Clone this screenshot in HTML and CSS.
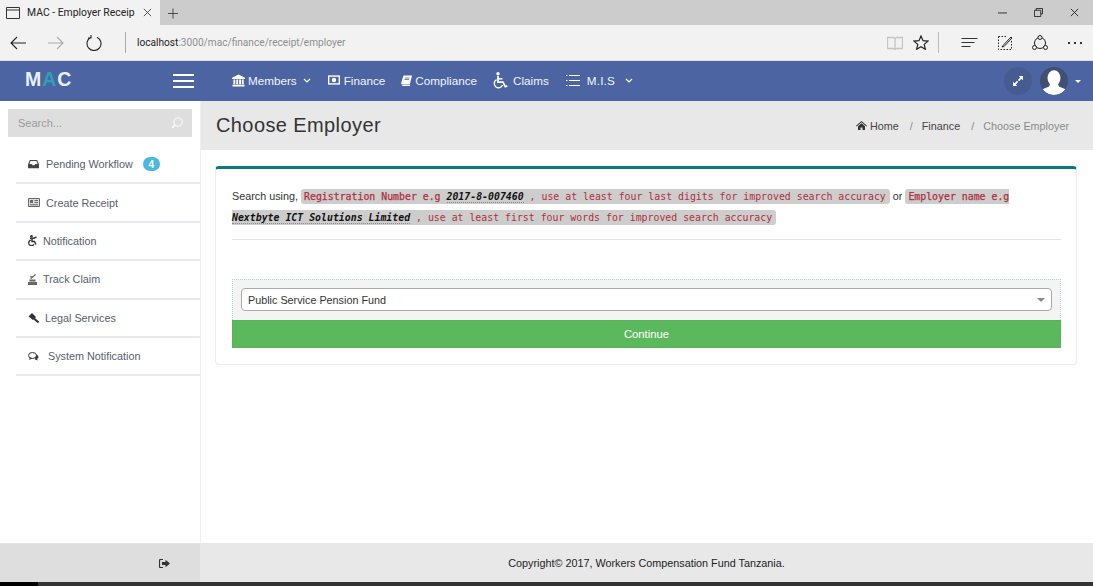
FILE: index.html
```html
<!DOCTYPE html>
<html lang="en">
<head>
<meta charset="utf-8">
<title>MAC - Employer Receipt</title>
<link rel="stylesheet" href="styles.css">
</head>
<body>
<div class="chrome-tabs">
  <div class="tab">
    <svg class="tab-page" viewBox="0 0 14 12"><path d="M.5.5h13v11H.5zM.5 3h13" fill="none" stroke="#333"/></svg>
    <span class="tab-title">MAC - Employer Receip</span>
    <svg class="tab-x" viewBox="0 0 10 10"><path d="M1 1l8 8M9 1l-8 8" stroke="#444" fill="none"/></svg>
  </div>
  <svg class="new-tab" viewBox="0 0 12 12"><path d="M6 0v12M0 6h12" stroke="#333" fill="none"/></svg>
  <div class="win-btns">
    <svg viewBox="0 0 10 10"><path d="M0 5.500h10" stroke="#222" fill="none"/></svg>
    <svg viewBox="0 0 10 10"><path d="M2.500 2.500V.5h7v6h-2M.5 2.500h7v7h-7z" stroke="#222" fill="none"/></svg>
    <svg viewBox="0 0 10 10"><path d="M1 1l8 8M9 1l-8 8" stroke="#222" fill="none"/></svg>
  </div>
</div>
<div class="chrome-bar">
  <svg class="ctl" viewBox="0 0 16 14"><path d="M16 7H1M7 1L1 7l6 6" fill="none" stroke="#222" stroke-width="1.100"/></svg>
  <svg class="ctl ctl-fwd" viewBox="0 0 16 14"><path d="M0 7h15M9 1l6 6-6 6" fill="none" stroke="#aaa" stroke-width="1.100"/></svg>
  <svg class="ctl ctl-reload" viewBox="0 0 16 16"><path d="M5 2.200A7 7 0 1 0 11 2.200M5 0v3H2" fill="none" stroke="#222" stroke-width="1.100"/></svg>
  <div class="addr-sep"></div>
  <div class="addr"><span class="host">localhost</span>:3000/mac/finance/receipt/employer</div>
  <div class="bar-right">
    <svg class="r-book" viewBox="0 0 16 14"><path d="M.5 1.500h6l1.500 1 1.500-1h6v11h-6l-1.500 1-1.500-1h-6zM8 2.500v10" fill="none" stroke="#c4c4c4" stroke-width="1.300"/></svg>
    <svg class="r-star" viewBox="0 0 16 15"><path d="M8 1l2 4.700 5 .4-3.800 3.300 1.200 4.900L8 11.700l-4.400 2.600 1.200-4.900L1 6.100l5-.4z" fill="none" stroke="#222" stroke-width="1.200"/></svg>
    <div class="bar-sep"></div>
    <svg class="r-hub" viewBox="0 0 16 10"><path d="M0 .5h16M0 4.500h13M0 8.500h9" stroke="#333" fill="none"/></svg>
    <svg class="r-note" viewBox="0 0 16 16"><path d="M1.500 1.500h8M1.500 1.500v13h13V6" fill="none" stroke="#222" stroke-dasharray="1.500 1.500"/><path d="M6 10.500L14 2l1 1-8 8.500-2 .5z" fill="none" stroke="#222"/></svg>
    <svg class="r-share" viewBox="0 0 16 16"><circle cx="8" cy="8" r="5.500" fill="none" stroke="#222"/><circle cx="8" cy="2.500" r="2" fill="#f2f2f2" stroke="#222"/><circle cx="2.500" cy="12.500" r="2" fill="#f2f2f2" stroke="#222"/><circle cx="13.500" cy="12.500" r="2" fill="#f2f2f2" stroke="#222"/></svg>
    <svg class="r-more" viewBox="0 0 14 2"><path d="M0 0h2v2H0zM6 0h2v2H6zM12 0h2v2h-2z" fill="#333"/></svg>
  </div>
</div>
<header class="nav">
  <div class="brand">M<span class="brand-a">A</span>C</div>
  <div class="burger"><i></i><i></i><i></i></div>
  <nav class="menu">
    <a class="m-item m-members">
      <svg class="ico13" viewBox="0 0 14 13"><path d="M7 0l7 3.500V5H0V3.500zM1.500 5.500h2v5h-2zM4.600 5.500h2v5h-2zM7.700 5.500h2v5h-2zM10.600 5.500h2v5h-2zM.5 11h13v2H.5z" fill="#fff"/></svg>
      <span>Members</span>
      <svg class="chev" viewBox="0 0 8 5"><path d="M1 1l3 3 3-3" fill="none" stroke="#fff" stroke-width="1.200"/></svg>
    </a>
    <a class="m-item m-finance">
      <svg class="ico-money" viewBox="0 0 13 10"><path d="M0 0h13v10H0z" fill="#fff"/><path d="M1.500 1.500h10v7h-10z" fill="#4c64a2"/><circle cx="6.500" cy="5" r="2.400" fill="#fff"/></svg>
      <span>Finance</span>
    </a>
    <a class="m-item m-compliance">
      <svg class="ico11" viewBox="0 0 11 11"><path d="M2.500.5h8.500L8.800 9.500H1.200C.2 9.500 0 8.500.3 7.500z" fill="#fff"/><path d="M1.200 10.500h7.800" stroke="#fff"/><path d="M4 3h4.500M3.600 4.500h4.500" stroke="#4c64a2" stroke-width=".8"/></svg>
      <span>Compliance</span>
    </a>
    <a class="m-item m-claims">
      <svg class="ico-wheel" viewBox="0 0 16 17"><circle cx="6" cy="1.800" r="1.700" fill="#fff"/><path d="M6 4v6.200h5l2.300 4.500 2-.8" fill="none" stroke="#fff" stroke-width="1.700"/><path d="M6 6.800h4.500" stroke="#fff" stroke-width="1.500"/><path d="M4.600 7.600a4.300 4.300 0 1 0 6 5.300" fill="none" stroke="#fff" stroke-width="1.400"/></svg>
      <span>Claims</span>
    </a>
    <a class="m-item m-mis">
      <svg class="ico-list" viewBox="0 0 14 11"><path d="M3 .5h11M3 5.500h11M3 10.500h11M0 .5h1.500M0 5.500h1.500M0 10.500h1.500" stroke="#fff" fill="none"/></svg>
      <span>M.I.S</span>
      <svg class="chev" viewBox="0 0 8 5"><path d="M1 1l3 3 3-3" fill="none" stroke="#fff" stroke-width="1.200"/></svg>
    </a>
  </nav>
  <div class="nav-right">
    <div class="circle">
      <svg class="expand" viewBox="0 0 10 10"><path d="M5.800 0H10v4.200L8.500 2.800 6 5.200 4.800 4 7.200 1.500zM4.200 10H0V5.800l1.500 1.400L4 4.800 5.200 6 2.800 8.500z" fill="#fff"/></svg>
    </div>
    <div class="circle avatar">
      <svg viewBox="0 0 28 28"><defs><clipPath id="ac"><circle cx="14" cy="14" r="14"/></clipPath></defs><g clip-path="url(#ac)"><ellipse cx="14" cy="11" rx="6.500" ry="7.800" fill="#fff"/><path d="M10 17h8l1 2.500 7 3V28H2v-5.500l7-3z" fill="#fff"/></g></svg>
    </div>
    <span class="caret"></span>
  </div>
</header>
<div class="main">
  <aside class="side">
    <div class="search">
      <span>Search...</span>
      <svg viewBox="0 0 12 12"><circle cx="7" cy="5" r="4.200" fill="none" stroke="#fff"/><path d="M4 8l-3 3" stroke="#fff" stroke-width="1.200"/></svg>
    </div>
    <ul class="side-list">
      <li><svg class="s-ico s-inbox" viewBox="0 0 12 10"><path d="M2 .5h8l2 5V9.500H0V5.500z" fill="#444"/><path d="M2.800 1.700h6.400l1.200 3.300H8L7 6.300H5L4 5H1.600z" fill="#fff"/></svg><span class="lab l-pending">Pending Workflow</span><span class="badge">4</span></li>
      <li><svg class="s-ico s-wide" viewBox="0 0 12 9"><path d="M.5.500h11v8H.5z" fill="#ddd" stroke="#666"/><path d="M2 2h3v3H2zM6.500 2h3.500v1H6.500zM6.500 4h3.500v1H6.500zM2 6.200h8v1H2z" fill="#666"/></svg><span class="lab l-create">Create Receipt</span></li>
      <li><svg class="s-ico s-small" viewBox="0 0 9 11"><circle cx="3.500" cy="1.300" r="1.300" fill="#333"/><path d="M2 3.200h4l2.500-1.400M4 3v3.500h2.500l1.500 3" fill="none" stroke="#333" stroke-width="1.500"/><path d="M2.800 5.200a2.800 2.800 0 1 0 3.200 4" fill="none" stroke="#333" stroke-width="1.300"/></svg><span class="lab l-notif">Notification</span></li>
      <li><svg class="s-ico s-small" viewBox="0 0 9 11"><path d="M0 8h9v3H0zM1.500 5.500h6v2h-6z" fill="#666"/><path d="M3 4.500L7.500.5" stroke="#666" stroke-width="1.200"/><path d="M2 2.500h3M2 4h2" stroke="#666" stroke-width=".7"/></svg><span class="lab l-track">Track Claim</span></li>
      <li><svg class="s-ico s-gavel" viewBox="0 0 11 10"><path d="M4 0l4 4-3 3-4.500-3.500z" fill="#333"/><path d="M6 5.500l4.500 4" stroke="#333" stroke-width="2"/></svg><span class="lab l-legal">Legal Services</span></li>
      <li><svg class="s-ico s-chat" viewBox="0 0 11 9"><ellipse cx="4.500" cy="3.500" rx="4" ry="3" fill="none" stroke="#333"/><path d="M2 5.500L1 8l3-1.500" fill="#333"/><path d="M8.500 2.500c2.500 1.500 2.500 3.500.5 4.500l1 1.500-3-1" fill="#333"/></svg><span class="lab l-system">System Notification</span></li>
    </ul>
  </aside>
  <main class="content">
    <div class="page-head">
      <h1>Choose Employer</h1>
      <ol class="crumbs">
        <li class="c-home"><svg viewBox="0 0 11 9"><path d="M5.500 0L11 4.700l-.6.700L5.500 1.300.6 5.400 0 4.700zM2 5.300l3.500-3 3.500 3V9H6.500V6.500h-2V9H2z" fill="#333"/></svg>Home</li>
        <li class="c-sep">/</li>
        <li>Finance</li>
        <li class="c-sep">/</li>
        <li class="c-cur">Choose Employer</li>
      </ol>
    </div>
    <section class="card">
      <p class="hint">Search using, <code><strong>Registration Number e.g</strong> <b>2017-8-007460</b> , use at least four last digits for improved search accuracy</code> or <code><strong>Employer name e.g</strong> <b>Nextbyte ICT Solutions Limited</b> , use at least first four words for improved search accuracy</code></p>
      <hr class="rule">
      <div class="select-wrap">
        <div class="select"><span>Public Service Pension Fund</span><i class="sel-caret"></i></div>
      </div>
      <button class="continue" type="button">Continue</button>
    </section>
  </main>
</div>
<footer class="foot">
  <div class="foot-left">
    <svg viewBox="0 0 11 9"><path d="M4 .5H1.500A1 1 0 0 0 .5 1.500v6a1 1 0 0 0 1 1H4" fill="none" stroke="#333" stroke-width="1.200"/><path d="M3 3h3.500V.8L11 4.500 6.500 8.200V6H3z" fill="#333"/></svg>
  </div>
  <div class="foot-right">Copyright© 2017, Workers Compensation Fund Tanzania.</div>
</footer>
<div class="taskbar"><i></i></div>
</body>
</html>
```
FILE: styles.css
```css
* { box-sizing: border-box; }
html, body { margin: 0; padding: 0; }
body {
  width: 1093px;
  height: 586px;
  overflow: hidden;
  display: flex;
  flex-direction: column;
  font-family: "Liberation Sans", Arial, sans-serif;
  font-size: 12px;
  background: #fff;
  color: #333;
}
svg { display: block; flex: none; }

.chrome-tabs { height: 25px; background: #cccccc; display: flex; align-items: stretch; flex: none; }
.tab { width: 160px; background: #f2f2f2; display: flex; align-items: center; padding-left: 6px; }
.tab-page { width: 14px; height: 12px; }
.tab-title { margin-left: 7px; font-family: Roboto, sans-serif; font-size: 10.400px; color: #222; white-space: nowrap; width: 116px; }
.tab-x { width: 9px; height: 9px; }
.new-tab { width: 10px; height: 11px; margin: 8px 0 0 8px; }
.win-btns { margin-left: auto; display: flex; align-items: center; gap: 27px; padding-right: 14px; }
.win-btns svg { width: 9px; height: 9px; }

.chrome-bar { height: 36px; background: #f2f2f2; border-bottom: 1px solid #dedede; display: flex; align-items: center; flex: none; padding-left: 10px; }
.ctl { width: 16px; height: 14px; }
.ctl-fwd { margin-left: 22px; }
.ctl-reload { margin-left: 22px; width: 16px; height: 16px; }
.addr-sep { width: 1px; height: 21px; background: #aaa; margin-left: 23px; }
.addr { margin-left: 11px; font-family: Roboto, sans-serif; font-size: 10.150px; color: #8e8e8e; white-space: nowrap; }
.host { color: #222; }
.bar-right { margin-left: auto; display: flex; align-items: center; padding-right: 11px; }
.r-book { width: 16px; height: 14px; }
.r-star { width: 16px; height: 15px; margin-left: 10px; }
.bar-sep { width: 1px; height: 21px; background: #bbb; margin-left: 9px; }
.r-hub { width: 17px; height: 10px; margin-left: 22px; }
.r-note { width: 16px; height: 16px; margin-left: 19px; }
.r-share { width: 16px; height: 16px; margin-left: 19px; }
.r-more { width: 14px; height: 2px; margin-left: 20px; }

.nav { height: 40px; background: #4c64a2; display: flex; align-items: center; flex: none; color: #fff; }
.brand { width: 173px; padding: 0 0 4px 25px; font-weight: 700; font-size: 19.500px; letter-spacing: 1px; color: #e8f0f8; }
.brand-a { color: #2da3ad; }
.burger { width: 21px; display: flex; flex-direction: column; gap: 4px; }
.burger i { display: block; height: 2px; background: #fff; }
.menu { display: flex; align-items: center; margin-left: 38px; padding-bottom: 2px; }
.m-item { display: flex; align-items: center; font-size: 11.700px; color: #f2f5fb; white-space: nowrap; }
.ico13 { width: 13px; height: 13px; }
.ico-money { width: 12px; height: 10px; }
.ico11 { width: 11px; height: 11px; }
.chev { width: 8px; height: 5px; margin-left: 6px; }
.m-members span { margin-left: 3px; }
.m-finance { margin-left: 17px; }
.m-finance span { margin-left: 4px; }
.m-compliance { margin-left: 16px; }
.m-compliance span { margin-left: 3px; }
.m-claims { margin-left: 15px; }
.ico-wheel { width: 16px; height: 17px; }
.m-claims span { margin-left: 5px; }
.m-mis { margin-left: 17px; }
.ico-list { width: 14px; height: 11px; }
.m-mis span { margin-left: 7px; letter-spacing: .2px; }
.m-mis .chev { margin-left: 10px; }
.nav-right { margin-left: auto; display: flex; align-items: center; padding-right: 12px; }
.circle { width: 28px; height: 28px; border-radius: 50%; background: #465b92; display: flex; align-items: center; justify-content: center; }
.expand { width: 10px; height: 10px; }
.avatar { margin-left: 8px; overflow: hidden; background: #3f5072; }
.avatar svg { width: 28px; height: 28px; }
.caret { width: 0; height: 0; margin-left: 7px; border-left: 3px solid transparent; border-right: 3px solid transparent; border-top: 3px solid #fff; }

.main { flex: 1; display: flex; min-height: 0; }
.side { width: 201px; border-right: 1px solid #efefef; padding: 8px 0 0 8px; flex: none; }
.search { width: 184px; height: 28px; background: #dedede; display: flex; align-items: center; justify-content: space-between; padding: 0 9px 1px 10px; font-size: 11px; color: #9a9a9a; }
.search svg { width: 12px; height: 12px; }
.side-list { list-style: none; margin: 9px 0 0 8px; padding: 0; }
.side-list li { height: 38.400px; border-bottom: 2px solid #e8e8ee; display: flex; align-items: center; padding-left: 12px; font-size: 10.800px; color: #555e6e; white-space: nowrap; }
.s-ico { width: 12px; height: 10px; }
.s-inbox { width: 11px; }
.s-wide { height: 9px; }
.s-small { width: 9px; height: 11px; }
.s-gavel { width: 11px; height: 10px; }
.s-chat { width: 11px; height: 9px; }
.l-pending { margin-left: 7px; }
.l-create { margin-left: 6px; }
.l-notif, .l-track { margin-left: 6px; }
.l-legal { margin-left: 6px; }
.l-system { margin-left: 9px; }
.badge { margin-left: 10px; width: 17px; height: 14px; border-radius: 8px; background: #4bb8df; color: #fff; font-size: 10px; font-weight: 700; display: flex; align-items: center; justify-content: center; }

.content { flex: 1; min-width: 0; padding: 0; }
.page-head { height: 49px; background: #e8e8e8; display: flex; align-items: center; justify-content: space-between; padding: 0 24px 0 15px; }
h1 { margin: 0; font-weight: 400; font-size: 20px; letter-spacing: .4px; color: #333; }
.crumbs { list-style: none; margin: 0; padding: 0; display: flex; align-items: center; font-size: 10.800px; color: #444; }
.c-home { display: flex; align-items: center; gap: 3px; }
.c-home svg { width: 11px; height: 9px; }
.c-sep { margin: 0 9px 0 11px; color: #888; }
.c-cur { color: #8a8a8a; }

.card { margin: 16px 16px 0 14px; height: 199px; background: #fff; border: 1px solid #ececec; border-top: 3px solid #0b7880; border-radius: 4px; padding: 17px 15px 0 16px; }
.hint { margin: 0; font-size: 10.800px; line-height: 21px; color: #333; }
code { font-family: "DejaVu Sans Mono", monospace; font-size: 9.870px; background: #cdcdcd; color: #b0303f; padding: 2px 4px 2px 3px; border-radius: 3px; }
code strong { font-weight: 400; -webkit-text-stroke: .25px #b0303f; }
code b { font-weight: 700; font-style: italic; color: #111; border-bottom: 1px dotted #888; white-space: nowrap; }
.rule { margin: 11px 0 0; border: 0; border-top: 1px solid #e4e4e4; }
.select-wrap { margin-top: 39px; height: 41px; background: #f4f4f4; border: 1px dotted #a8dadd; border-bottom: 0; padding: 8px 8px 0; }
.select { height: 23px; background: #fff; border: 1px solid #aaa; border-radius: 4px; display: flex; align-items: center; justify-content: space-between; padding: 0 6px; font-size: 10.800px; color: #333; }
.sel-caret { width: 0; height: 0; border-left: 4px solid transparent; border-right: 4px solid transparent; border-top: 4px solid #888; }
.continue { display: block; width: 100%; height: 28px; border: 1px solid #55b358; background: #5cb85c; color: #fff; font-family: inherit; font-size: 11.300px; padding: 0; }

.foot { height: 39px; display: flex; flex: none; }
.foot-left { width: 200px; background: #dedede; border-top: 1px solid #e4e4e4; display: flex; align-items: center; justify-content: flex-end; padding-right: 30px; }
.foot-left svg { width: 11px; height: 9px; }
.foot-right { flex: 1; background: #e8e8e8; display: flex; align-items: center; justify-content: center; font-size: 10.800px; color: #222; }
.taskbar { height: 4px; background: #333; flex: none; }
.taskbar i { display: block; width: 38px; height: 4px; background: #000; }
```
